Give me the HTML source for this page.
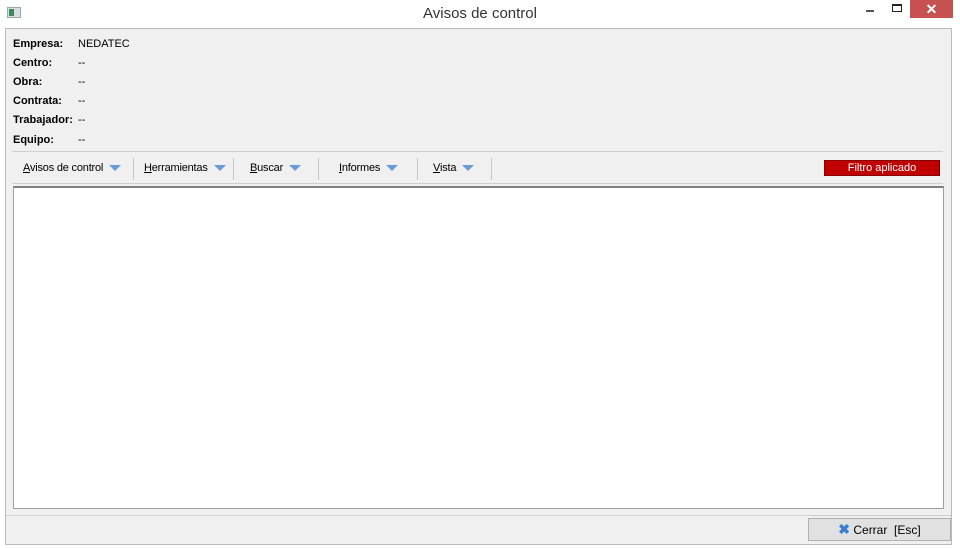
<!DOCTYPE html>
<html><head><style>
*{margin:0;padding:0;box-sizing:border-box}
body{width:960px;height:548px;background:#fff;font-family:"Liberation Sans",Arial,sans-serif;font-size:11px;color:#000;position:relative;overflow:hidden}
.a{position:absolute}
.lbl{position:absolute;left:13px;font-weight:bold;font-size:11px}
.val{position:absolute;left:78px;font-size:11px}
.tb{position:absolute;top:158px;height:22px;line-height:21px;font-size:11px;border-right:1px solid #c8c8c8;padding-left:10px;letter-spacing:-0.2px}
.tri{display:inline-block;width:0;height:0;border-left:6px solid transparent;border-right:6px solid transparent;border-top:6px solid #6a9ad8;margin-left:6px;vertical-align:middle}
u{text-decoration:underline}
</style></head><body>
<div class="a" style="left:7px;top:7px;width:14px;height:11px;background:#d8dde2;border:1px solid #9aa"></div>
<div class="a" style="left:9px;top:9px;width:5px;height:7px;background:#3a8a5a"></div>
<div class="a" style="left:0;top:5px;width:960px;text-align:center;font-size:15px;color:#333">Avisos de control</div>
<div class="a" style="left:866px;top:10px;width:8px;height:2px;background:#555"></div>
<div class="a" style="left:892px;top:4px;width:10px;height:8px;border:1px solid #222;border-top-width:2px"></div>
<div class="a" style="left:910px;top:0;width:43px;height:18px;background:#c75050;color:#fff;text-align:center;font-size:14px;line-height:18px;font-weight:bold">✕</div>
<div class="a" style="left:5px;top:28px;width:947px;height:517px;background:#f0f0f0;border:1px solid #bcbcbc"></div>
<div class="lbl" style="top:38px">Empresa:</div><div class="val" style="top:38px">NEDATEC</div>
<div class="lbl" style="top:57px">Centro:</div><div class="val" style="top:57px">--</div>
<div class="lbl" style="top:76px">Obra:</div><div class="val" style="top:76px">--</div>
<div class="lbl" style="top:95px">Contrata:</div><div class="val" style="top:95px">--</div>
<div class="lbl" style="top:114px">Trabajador:</div><div class="val" style="top:114px">--</div>
<div class="lbl" style="top:134px">Equipo:</div><div class="val" style="top:134px">--</div>
<div class="a" style="left:12px;top:151px;width:931px;height:1px;background:#cfcfcf"></div>
<div class="tb" style="left:13px;width:121px"><u>A</u>visos de control<span class="tri"></span></div>
<div class="tb" style="left:134px;width:100px"><u>H</u>erramientas<span class="tri"></span></div>
<div class="tb" style="left:234px;width:85px;padding-left:16px"><u>B</u>uscar<span class="tri"></span></div>
<div class="tb" style="left:319px;width:99px;padding-left:20px"><u>I</u>nformes<span class="tri"></span></div>
<div class="tb" style="left:418px;width:74px;padding-left:15px"><u>V</u>ista<span class="tri"></span></div>
<div class="a" style="left:824px;top:160px;width:116px;height:16px;background:#c00000;border:1px solid #800;color:#fff;text-align:center;line-height:14px;font-size:11px">Filtro aplicado</div>
<div class="a" style="left:12px;top:183px;width:931px;height:1px;background:#cfcfcf"></div>
<div class="a" style="left:13px;top:186px;width:931px;height:323px;background:#fff;border:1px solid #a0a0a0;border-top:2px solid #808080"></div>
<div class="a" style="left:6px;top:515px;width:945px;height:1px;background:#d0d0d0"></div>
<div class="a" style="left:808px;top:518px;width:143px;height:23px;background:#e1e1e1;border:1px solid #b0b0b0;text-align:center;line-height:21px;font-size:12px"><span style="color:#3b7fd0;font-weight:bold;font-size:14px">✖</span> Cerrar &nbsp;[Esc]</div>
</body></html>
